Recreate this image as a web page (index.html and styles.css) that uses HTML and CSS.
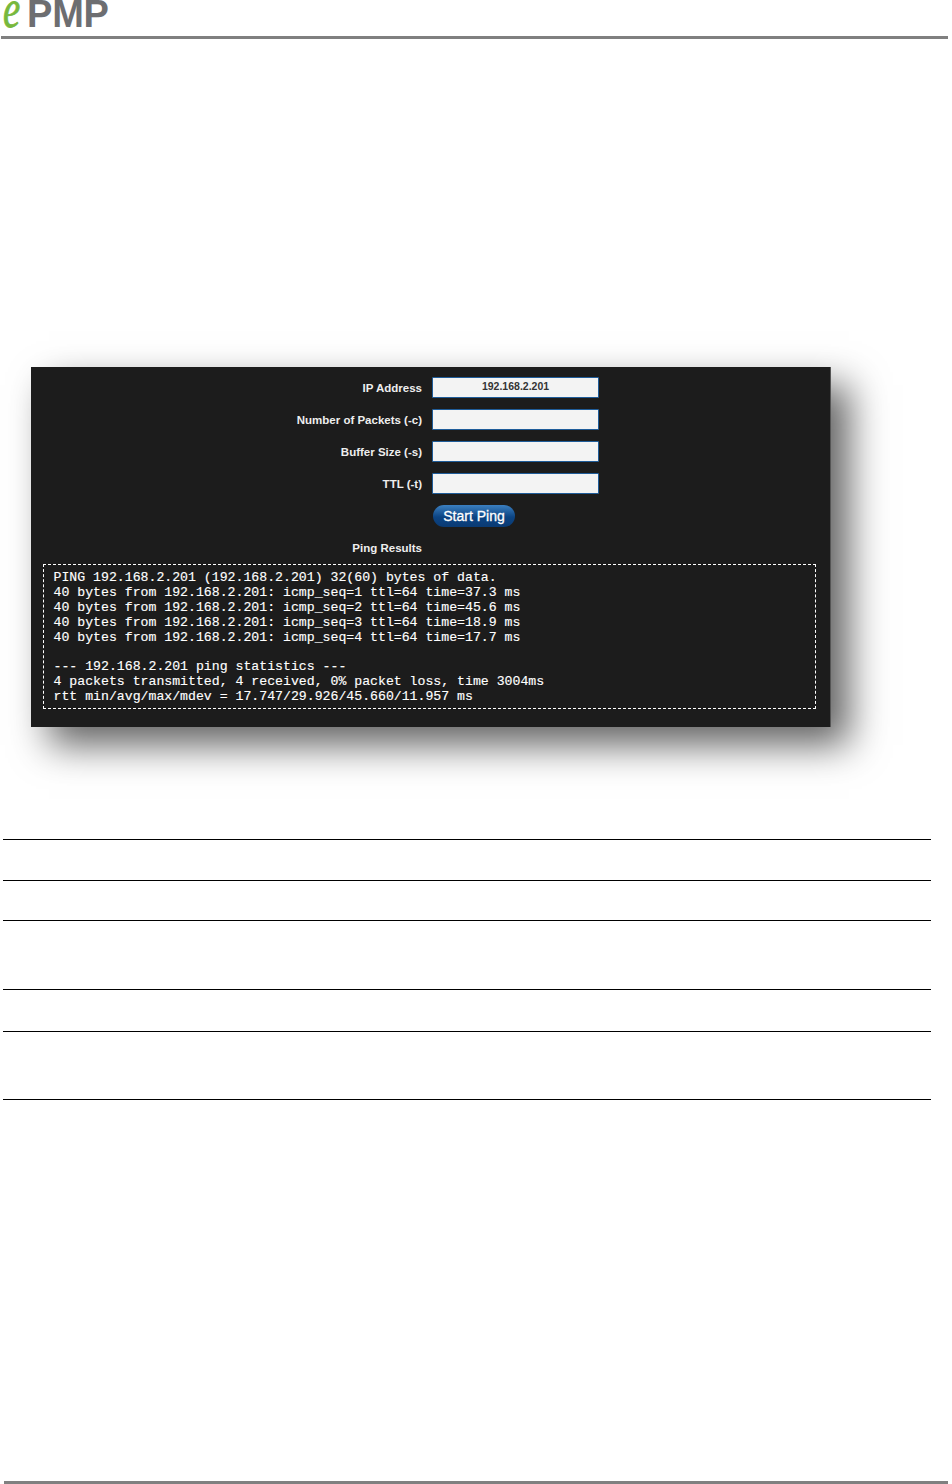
FILE: index.html
```html
<!DOCTYPE html>
<html lang="en">
<head>
<meta charset="utf-8">
<title>ePMP Ping</title>
<link rel="stylesheet" href="styles.css">
</head>
<body>
<header class="page-header">
  <div class="logo"><span class="logo-e">e</span><span class="logo-pmp">PMP</span></div>
</header>
<main>
  <section class="panel">
    <form class="ping-form">
      <label class="field-label">IP Address</label>
      <div class="field-input">192.168.2.201</div>
      <label class="field-label">Number of Packets (-c)</label>
      <div class="field-input"></div>
      <label class="field-label">Buffer Size (-s)</label>
      <div class="field-input"></div>
      <label class="field-label">TTL (-t)</label>
      <div class="field-input"></div>
      <div class="button-cell"><span class="start-button">Start Ping</span></div>
    </form>
    <div class="results-label">Ping Results</div>
    <pre class="results">PING 192.168.2.201 (192.168.2.201) 32(60) bytes of data.
40 bytes from 192.168.2.201: icmp_seq=1 ttl=64 time=37.3 ms
40 bytes from 192.168.2.201: icmp_seq=2 ttl=64 time=45.6 ms
40 bytes from 192.168.2.201: icmp_seq=3 ttl=64 time=18.9 ms
40 bytes from 192.168.2.201: icmp_seq=4 ttl=64 time=17.7 ms

--- 192.168.2.201 ping statistics ---
4 packets transmitted, 4 received, 0% packet loss, time 3004ms
rtt min/avg/max/mdev = 17.747/29.926/45.660/11.957 ms</pre>
  </section>
  <div class="rules">
    <div class="rule rule-a"></div>
    <div class="rule rule-b"></div>
    <div class="rule rule-c"></div>
    <div class="rule rule-d"></div>
    <div class="rule rule-e"></div>
  </div>
</main>
<footer class="page-footer"></footer>
</body>
</html>
```
FILE: styles.css
```css
html, body { margin: 0; padding: 0; background: #fff; }
body { width: 952px; height: 1484px; overflow: hidden; position: relative; font-family: "Liberation Sans", Arial, sans-serif; }

.page-header { height: 36px; width: 947px; margin-left: 1px; border-bottom: 3px solid #808080; }
.logo { display: flex; align-items: baseline; height: 36px; padding-left: 2px; }
.logo-e { font-family: "Liberation Serif", serif; font-style: italic; color: #78b83c; font-size: 54px; line-height: 19px; width: 24px; transform: scaleX(.72); transform-origin: left center; -webkit-text-stroke: .8px #78b83c; }
.logo-pmp { font-weight: 700; color: #6d6e71; font-size: 38px; line-height: 28px; letter-spacing: -.2px; }

.panel { box-sizing: border-box; width: 800px; height: 360px; margin: 328px 0 0 31px; background: #1c1c1c; border-right: 1px solid #555; box-shadow: 18px 18px 36px rgba(0,0,0,.62); padding-top: 10px; }

.ping-form { display: grid; grid-template-columns: 391px 167px; column-gap: 10px; row-gap: 11px; grid-auto-rows: 21px; align-items: start; }
.field-label { text-align: right; color: #eee; font-size: 11.5px; font-weight: 700; line-height: 22px; }
.field-input { box-sizing: border-box; height: 21px; background: #f3f3f3; border: 1px solid #1f5c99; border-radius: 1px; color: #333; font-size: 10.5px; font-weight: 700; line-height: 17px; text-align: center; }
.button-cell { grid-column: 2; height: 22px; }
.start-button { display: block; box-sizing: border-box; width: 82px; height: 22px; margin-left: 1px; border-radius: 11px; background: linear-gradient(#3b7fc0, #0c4483 55%, #0a3a73); color: #fff; font-size: 14px; line-height: 22px; text-align: center; -webkit-text-stroke: .3px #fff; }

.results-label { width: 391px; margin-top: 15px; text-align: right; color: #eee; font-size: 11.5px; font-weight: 700; line-height: 14px; }
.results { box-sizing: border-box; width: 773px; height: 145px; margin: 9px 0 0 12px; padding: 6px 9.5px 0; border: 1px dashed #fff; color: #fff; font-family: "Liberation Mono", "Courier New", monospace; font-size: 13.2px; line-height: 14.9px; -webkit-text-stroke: .15px #fff; overflow: hidden; }

.rules { width: 928px; margin: 112px 0 0 3px; border-top: 1px solid #000; }
.rule { border-bottom: 1px solid #000; box-sizing: border-box; }
.rule-a { height: 41px; }
.rule-b { height: 40px; }
.rule-c { height: 69px; }
.rule-d { height: 42px; }
.rule-e { height: 68px; }

.page-footer { position: absolute; left: 4px; bottom: 0; width: 944px; height: 3px; background: #808080; }
```
